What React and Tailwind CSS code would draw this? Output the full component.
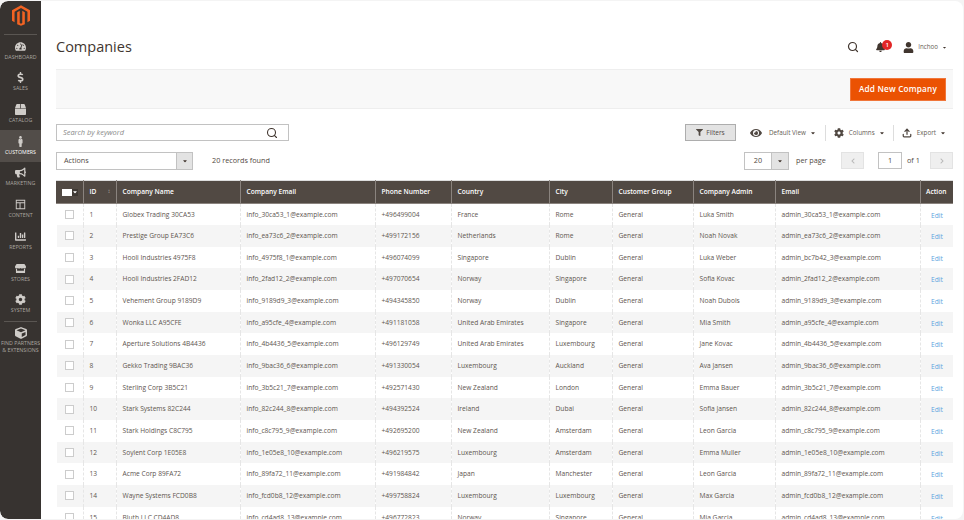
import React from 'react';
import {
  FaTachometerAlt, FaDollarSign, FaBox, FaMale, FaBullhorn, FaChartBar, FaStore, FaCog, FaCube,
  FaFilter, FaEye, FaBell, FaUser, FaCaretDown, FaChevronLeft, FaChevronRight,
} from 'react-icons/fa';
import { FiSearch, FiUpload } from 'react-icons/fi';

const ContentIcon = ({ className }) => (
  <svg viewBox="0 0 14 14" className={className} fill="currentColor">
    <path fillRule="evenodd" d="M1 1h12v12H1zM2.2 2.2v2h9.6v-2zM2.2 5.4v6.4h3.6V5.4zM7 5.4v6.4h4.8V5.4z" />
  </svg>
);

const NAV = [
  { label: 'DASHBOARD', Icon: FaTachometerAlt },
  { label: 'SALES', Icon: FaDollarSign },
  { label: 'CATALOG', Icon: FaBox },
  { label: 'CUSTOMERS', Icon: FaMale, active: true },
  { label: 'MARKETING', Icon: FaBullhorn },
  { label: 'CONTENT', Icon: ContentIcon },
  { label: 'REPORTS', Icon: FaChartBar },
  { label: 'STORES', Icon: FaStore },
  { label: 'SYSTEM', Icon: FaCog },
];

const COLUMNS = [
  { label: 'ID', w: 33 },
  { label: 'Company Name', w: 124 },
  { label: 'Company Email', w: 135 },
  { label: 'Phone Number', w: 76 },
  { label: 'Country', w: 98 },
  { label: 'City', w: 63 },
  { label: 'Customer Group', w: 81 },
  { label: 'Company Admin', w: 82 },
  { label: 'Email', w: 145 },
  { label: 'Action', w: 33 },
];

const ROWS = [
  [1, 'Globex Trading 30CA53', 'info_30ca53_1@example.com', '+496499004', 'France', 'Rome', 'Luka Smith', 'admin_30ca53_1@example.com'],
  [2, 'Prestige Group EA73C6', 'info_ea73c6_2@example.com', '+499172156', 'Netherlands', 'Rome', 'Noah Novak', 'admin_ea73c6_2@example.com'],
  [3, 'Hooli Industries 4975F8', 'info_4975f8_1@example.com', '+496074099', 'Singapore', 'Dublin', 'Luka Weber', 'admin_bc7b42_3@example.com'],
  [4, 'Hooli Industries 2FAD12', 'info_2fad12_2@example.com', '+497070654', 'Norway', 'Singapore', 'Sofia Kovac', 'admin_2fad12_2@example.com'],
  [5, 'Vehement Group 9189D9', 'info_9189d9_3@example.com', '+494345850', 'Norway', 'Dublin', 'Noah Dubois', 'admin_9189d9_3@example.com'],
  [6, 'Wonka LLC A95CFE', 'info_a95cfe_4@example.com', '+491181058', 'United Arab Emirates', 'Singapore', 'Mia Smith', 'admin_a95cfe_4@example.com'],
  [7, 'Aperture Solutions 4B4436', 'info_4b4436_5@example.com', '+496129749', 'United Arab Emirates', 'Luxembourg', 'Jane Kovac', 'admin_4b4436_5@example.com'],
  [8, 'Gekko Trading 9BAC36', 'info_9bac36_6@example.com', '+491330054', 'Luxembourg', 'Auckland', 'Ava Jansen', 'admin_9bac36_6@example.com'],
  [9, 'Sterling Corp 3B5C21', 'info_3b5c21_7@example.com', '+492571430', 'New Zealand', 'London', 'Emma Bauer', 'admin_3b5c21_7@example.com'],
  [10, 'Stark Systems 82C244', 'info_82c244_8@example.com', '+494392524', 'Ireland', 'Dubai', 'Sofia Jansen', 'admin_82c244_8@example.com'],
  [11, 'Stark Holdings C8C795', 'info_c8c795_9@example.com', '+492695200', 'New Zealand', 'Amsterdam', 'Leon Garcia', 'admin_c8c795_9@example.com'],
  [12, 'Soylent Corp 1E05E8', 'info_1e05e8_10@example.com', '+496219575', 'Luxembourg', 'Amsterdam', 'Emma Muller', 'admin_1e05e8_10@example.com'],
  [13, 'Acme Corp 89FA72', 'info_89fa72_11@example.com', '+491984842', 'Japan', 'Manchester', 'Leon Garcia', 'admin_89fa72_11@example.com'],
  [14, 'Wayne Systems FCD0B8', 'info_fcd0b8_12@example.com', '+499758824', 'Luxembourg', 'Luxembourg', 'Max Garcia', 'admin_fcd0b8_12@example.com'],
  [15, 'Bluth LLC CD4AD8', 'info_cd4ad8_13@example.com', '+496772823', 'Norway', 'Singapore', 'Mia Garcia', 'admin_cd4ad8_13@example.com'],
];

const Logo = () => (
  <svg viewBox="0 0 40 46" className="w-[18px] h-[21px]" fill="#f26322">
    <path d="M20 0 40 11.5v23l-5.7 3.3V14.8L20 6.6 5.7 14.8v23L0 34.5v-23z" />
    <path d="M17.2 12.5v27.2l2.8 1.6 2.8-1.6V12.5l5.7 3.2v26.9L20 46l-8.5-3.4V15.7z" />
  </svg>
);

const Sidebar = () => (
  <aside className="w-[41px] shrink-0 bg-[#373330] text-[#aaa6a0] flex flex-col items-center rounded-l-lg overflow-hidden">
    <div className="h-[34px] w-[33px] shrink-0 flex items-center justify-center border-b border-[#5a5652] pb-[4px]">
      <Logo />
    </div>
    <div className="w-full flex flex-col">
      {NAV.map(({ label, Icon, active }) => (
        <div
          key={label}
          className={`h-[31.7px] flex flex-col items-center justify-end pb-[7px] ${active ? 'bg-[#524d49] text-white' : ''}`}
        >
          <Icon className="w-[11px] h-[11px] mb-[2px] text-[#cfccc8]" />
          <span className="text-[5.3px] leading-[6px] whitespace-nowrap">{label}</span>
        </div>
      ))}
    </div>
    <div className="w-[33px] border-t border-[#5a5652] mt-[1px] pt-[5px] flex flex-col items-center">
      <FaCube className="w-[12px] h-[12px] text-[#cfccc8] mb-[1px]" />
      <span className="text-[5.3px] leading-[7px] whitespace-nowrap">FIND PARTNERS</span>
      <span className="text-[5.3px] leading-[7px] whitespace-nowrap">&amp; EXTENSIONS</span>
    </div>
  </aside>
);

const TopBar = () => (
  <div className="h-[68px] shrink-0 flex items-center justify-between pr-[6px] pt-[38px] pb-[14px]">
    <h1 className="text-[14.5px] text-[#41362f] leading-none">Companies</h1>
    <div className="flex items-center text-[#41362f]">
      <FiSearch className="w-[12px] h-[12px] mr-[17px]" strokeWidth={2.4} />
      <div className="relative mr-[17px] w-[10px] h-[10px]">
        <FaBell className="w-[9px] h-[10px]" />
        <span className="absolute -top-[2px] left-[6px] w-[10px] h-[10px] rounded-full bg-[#e22626] text-white text-[6px] leading-[10px] text-center font-semibold">1</span>
      </div>
      <FaUser className="w-[11px] h-[11px] mr-[4px]" />
      <span className="text-[6.2px] text-[#676056]">Inchoo</span>
      <FaCaretDown className="w-[5px] h-[5px] ml-[4px]" />
    </div>
  </div>
);

const ActionBar = () => (
  <div className="h-[40px] shrink-0 bg-[#f8f8f8] border-y border-[#eeeeee] flex items-center justify-end pr-[7px]">
    <button className="w-[96px] h-[23px] bg-[#eb5202] border border-[#f0763a] text-white text-[8.2px] font-semibold tracking-[0.2px]">
      Add New Company
    </button>
  </div>
);

const Toolbar = () => (
  <div className="pt-[15px] shrink-0">
    <div className="flex items-center justify-between h-[17px]">
      <div className="w-[233px] h-[17px] border border-[#c2c2c2] bg-white flex items-center justify-between pl-[6px] pr-[10px]">
        <span className="italic text-[7.4px] text-[#8a8a8a]">Search by keyword</span>
        <FiSearch className="w-[12px] h-[12px] text-[#41362f]" strokeWidth={2.2} />
      </div>
      <div className="flex items-center text-[#514943]">
        <div className="w-[51px] h-[17px] mr-[14px] bg-[#e3e3e3] border border-[#adadad] flex items-center justify-center">
          <FaFilter className="w-[7px] h-[7px] mr-[3px]" />
          <span className="text-[6.5px]">Filters</span>
        </div>
        <div className="flex items-center h-[16px] border-r border-[#dddddd]">
          <FaEye className="w-[12px] h-[12px] mr-[7px]" />
          <span className="text-[6.3px] text-[#676056]">Default View</span>
          <FaCaretDown className="w-[6px] h-[6px] ml-[4px] mr-[9px] text-[#41362f]" />
        </div>
        <div className="flex items-center h-[16px] border-r border-[#dddddd]">
          <FaCog className="w-[10px] h-[10px] ml-[8px] mr-[5px]" />
          <span className="text-[6.3px] text-[#676056]">Columns</span>
          <FaCaretDown className="w-[6px] h-[6px] ml-[4px] mr-[8px] text-[#41362f]" />
        </div>
        <div className="flex items-center h-[16px]">
          <FiUpload className="w-[10px] h-[10px] ml-[8px] mr-[5px]" strokeWidth={3} />
          <span className="text-[6.3px] text-[#676056]">Export</span>
          <FaCaretDown className="w-[6px] h-[6px] ml-[4px] mr-[7px] text-[#41362f]" />
        </div>
      </div>
    </div>
    <div className="flex items-center justify-between h-[19px] mt-[10px]">
      <div className="flex items-center">
        <div className="w-[137px] h-[18px] border border-[#c2c2c2] bg-white flex items-center justify-between">
          <span className="text-[7.25px] text-[#514943] pl-[7px]">Actions</span>
          <span className="w-[16px] h-full bg-[#e3e3e3] border-l border-[#c2c2c2] flex items-center justify-center">
            <FaCaretDown className="w-[6px] h-[6px] text-[#41362f]" />
          </span>
        </div>
        <span className="ml-[19px] text-[7.25px] text-[#514943]">20 records found</span>
      </div>
      <div className="flex items-center">
        <div className="w-[45px] h-[18px] border border-[#c2c2c2] bg-white flex items-center justify-between">
          <span className="flex-1 text-center text-[7.25px] text-[#514943]">20</span>
          <span className="w-[17px] h-full bg-[#e3e3e3] border-l border-[#c2c2c2] flex items-center justify-center">
            <FaCaretDown className="w-[6px] h-[6px] text-[#41362f]" />
          </span>
        </div>
        <span className="ml-[7px] w-[45px] text-[7.25px] text-[#514943]">per page</span>
        <span className="w-[23px] h-[17px] bg-[#efefef] border border-[#e3e3e3] flex items-center justify-center">
          <FaChevronLeft className="w-[6px] h-[6px] text-[#b8b8b8]" />
        </span>
        <span className="ml-[14px] w-[24px] h-[17px] bg-white border border-[#c2c2c2] flex items-center justify-center text-[7.25px] text-[#514943]">1</span>
        <span className="ml-[5px] w-[23px] text-[7.25px] text-[#514943]">of 1</span>
        <span className="w-[23px] h-[17px] bg-[#efefef] border border-[#e3e3e3] flex items-center justify-center">
          <FaChevronRight className="w-[6px] h-[6px] text-[#b8b8b8]" />
        </span>
      </div>
    </div>
  </div>
);

const Checkbox = () => <span className="block w-[9px] h-[9px] border border-[#cccccc] bg-white mx-auto" />;

const Grid = () => (
  <div className="mt-[10px] flex-1 min-h-0 overflow-hidden">
    <table className="w-[897px] table-fixed border-collapse text-[6.65px] text-[#5e554f]">
      <colgroup>
        <col className="w-[27px]" />
        {COLUMNS.map((c) => <col key={c.label} style={{ width: c.w }} />)}
      </colgroup>
      <thead>
        <tr className="h-[23px] bg-[#514943] text-white">
          <th className="border border-[#8a837e] border-l-[#514943] border-t-[#dddddd]">
            <span className="inline-flex items-center w-[16px] h-[7px] bg-[#3f3934] align-middle">
              <span className="w-[10px] h-[7px] bg-white" />
              <FaCaretDown className="w-[6px] h-[6px] text-white" />
            </span>
          </th>
          {COLUMNS.map((c) => (
            <th
              key={c.label}
              className={`border border-[#8a837e] border-t-[#dddddd] last:border-r-[#514943] px-[5.5px] text-left font-semibold whitespace-nowrap ${c.label === 'Action' ? 'pl-[5px] pr-0' : ''}`}
            >
              <span className="flex items-center justify-between">
                {c.label}
                {c.label === 'ID' && <span className="text-[#a9a39e] text-[6px] font-normal">↕</span>}
              </span>
            </th>
          ))}
        </tr>
      </thead>
      <tbody>
        {ROWS.map((r) => (
          <tr key={r[0]} className="h-[21.66px] odd:bg-white even:bg-[#f5f5f5]">
            <td className="border-r border-dashed border-[#e6e6e6]"><Checkbox /></td>
            {[r[0], r[1], r[2], r[3], r[4], r[5], 'General', r[6], r[7]].map((v, i) => (
              <td key={i} className="border-r border-dashed border-[#e6e6e6] px-[5.5px] whitespace-nowrap overflow-hidden">{v}</td>
            ))}
            <td className="px-[10px] text-[#5aa3de]"><span className="relative top-[1px]">Edit</span></td>
          </tr>
        ))}
      </tbody>
    </table>
  </div>
);

export default function App() {
  return (
    <div className="w-[964px] h-[520px] bg-[#f4f4f4] pt-px pb-[1.5px] pr-px font-['Open_Sans',sans-serif]">
      <div className="h-full flex bg-white rounded-lg overflow-hidden">
        <Sidebar />
        <main className="flex-1 min-w-0 flex flex-col pl-[15px] pr-[10px]">
          <TopBar />
          <ActionBar />
          <Toolbar />
          <Grid />
        </main>
      </div>
    </div>
  );
}
